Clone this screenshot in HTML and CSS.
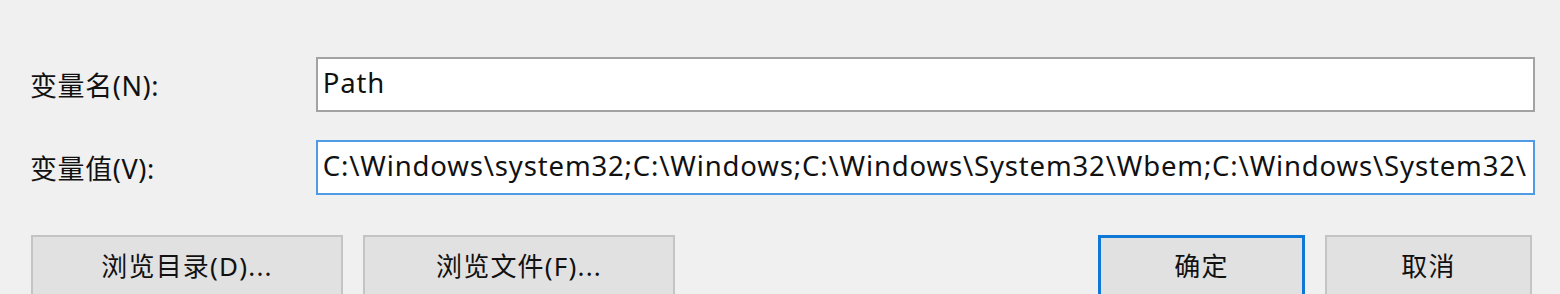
FILE: index.html
```html
<!DOCTYPE html>
<html lang="zh-CN">
<head>
<meta charset="UTF-8">
<title>编辑系统变量</title>
<link rel="stylesheet" href="styles.css">
</head>
<body>
<div class="dialog">
    <div class="row">
        <label class="label" for="name">变量名(N):</label>
        <div class="field" id="name">Path</div>
    </div>
    <div class="row">
        <label class="label" for="value">变量值(V):</label>
        <div class="field focused" id="value">C:\Windows\system32;C:\Windows;C:\Windows\System32\Wbem;C:\Windows\System32\</div>
    </div>
    <div class="buttons">
        <div class="group">
            <button class="btn wide">浏览目录(D)...</button>
            <button class="btn wide">浏览文件(F)...</button>
        </div>
        <div class="group">
            <button class="btn default">确定</button>
            <button class="btn">取消</button>
        </div>
    </div>
</div>
</body>
</html>
```

FILE: styles.css
```css
body {
    margin: 0;
    background: #f0f0f0;
    font-family: "Segoe UI", "Noto Sans", "Noto Sans CJK SC", sans-serif;
    color: #111;
    overflow: hidden;
}

.dialog {
    padding: 57px 25px 0 30px;
}

.row {
    display: flex;
    align-items: center;
    margin-bottom: 28px;
}

.label {
    width: 286px;
    font-size: 27px;
    letter-spacing: 0.6px;
}

.field {
    width: 1220px;
    height: 55px;
    box-sizing: border-box;
    border: 2px solid #a3a3a3;
    background: #fff;
    padding: 0 5px;
    font-size: 27.5px;
    letter-spacing: 0.85px;
    line-height: 48px;
    white-space: nowrap;
    overflow: hidden;
}

.field.focused {
    border-color: #4f9be6;
}

.buttons {
    display: flex;
    justify-content: space-between;
    padding-left: 1px;
    padding-right: 3px;
    margin-top: 40px;
}

.group {
    display: flex;
    gap: 20px;
}

.btn {
    width: 207px;
    height: 64px;
    box-sizing: border-box;
    background: #e1e1e1;
    border: 2px solid #c4c4c4;
    font-family: inherit;
    font-size: 26px;
    letter-spacing: 1.2px;
    color: #111;
    padding: 0 0 4px;
}

.btn.wide {
    width: 312px;
}

.btn.default {
    border: 3px solid #0f78d7;
}
```
